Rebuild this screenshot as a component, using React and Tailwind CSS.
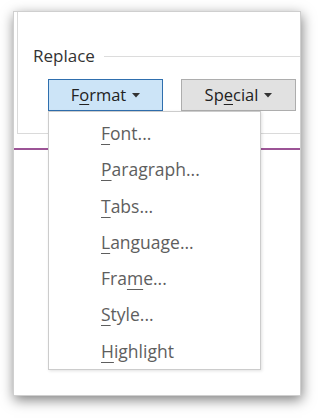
const items = [
  { key: "F", rest: "ont...", pre: "" },
  { key: "P", rest: "aragraph...", pre: "" },
  { key: "T", rest: "abs...", pre: "" },
  { key: "L", rest: "anguage...", pre: "" },
  { key: "m", rest: "e...", pre: "Fra" },
  { key: "S", rest: "tyle...", pre: "" },
  { key: "H", rest: "ighlight", pre: "" },
];

function Caret() {
  return (
    <svg width="8" height="5" viewBox="0 0 8 5" className="ml-[6px] mt-[1px]" aria-hidden="true">
      <polygon points="0,0 8,0 4,4.5" fill="#333" />
    </svg>
  );
}

export default function App() {
  return (
    <div
      className="h-[420px] w-[318px] bg-white pl-[13px] pt-[11px]"
      style={{ fontFamily: '"Open Sans", "Noto Sans", sans-serif' }}
    >
      <div className="relative h-[385px] w-[288px] border border-[#cfcfcf] bg-white shadow-[1px_4px_12px_rgba(0,0,0,0.5)]">
        {/* ── Replace group ── */}
        <div className="ml-[3px] h-[122px] border-b border-l border-[#dadada] pl-[15px] pt-[34px]">
          <div className="flex h-[20px] items-center">
            <span className="text-[17px] leading-[20px] text-[#333]">Replace</span>
            <div className="ml-[9px] h-px flex-1 bg-[#dcdcdc]" />
          </div>
          <div className="ml-[15px] mt-[13px] flex gap-[18px]">
            <button className="flex h-[32px] w-[115px] items-center justify-center border border-[#2f6fae] bg-[#cce4f7] text-[16.5px] text-[#222]">
              F<span className="underline underline-offset-[3px]">o</span>rmat
              <Caret />
            </button>
            <button className="flex h-[32px] w-[115px] items-center justify-center border border-[#adadad] bg-[#e1e1e1] text-[16.5px] text-[#222]">
              Sp<span className="underline underline-offset-[3px]">e</span>cial
              <Caret />
            </button>
          </div>
        </div>

        <div className="mt-[14px] h-[2px] bg-[#9c5496]" />

        {/* ── Format dropdown ── */}
        <div className="absolute left-[34px] top-[99px] h-[259px] w-[213px] border border-[#cccccc] bg-white pt-[3px] shadow-[1px_1px_3px_rgba(0,0,0,0.12)]">
          {items.map((item) => (
            <div
              key={item.key + item.rest}
              className="h-[36.3px] pl-[52px] text-[17.5px] leading-[36px] text-[#5e5e5e]"
            >
              {item.pre}
              <span className="underline decoration-1 underline-offset-[4px]">{item.key}</span>
              {item.rest}
            </div>
          ))}
        </div>
      </div>
    </div>
  );
}
